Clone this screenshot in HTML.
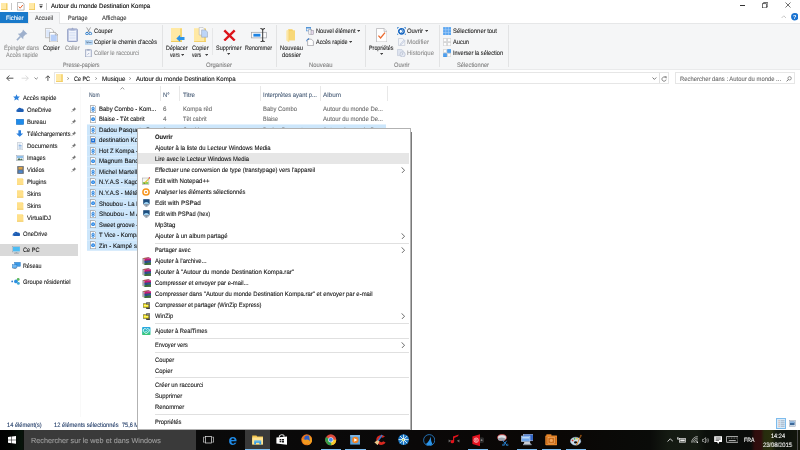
<!DOCTYPE html><html lang="fr"><head><meta charset="utf-8"><title>Autour du monde Destination Kompa</title><style>
html,body{margin:0;padding:0;background:#fff;}body{width:800px;height:450px;overflow:hidden;position:relative;font-family:"Liberation Sans", sans-serif;}
#root{position:absolute;left:0;top:0;width:800px;height:450px;overflow:hidden;}
#root div,#root svg,#root span{position:absolute;}
#root span{white-space:nowrap;line-height:10px;height:10px;transform-origin:0 50%;-webkit-text-stroke:0.1px;text-rendering:geometricPrecision;}
#root .ly{left:0;top:0;width:800px;height:450px;will-change:transform;}
</style></head><body><div id="root">
<div class="ly" id="ly-base">
<svg style="left:1px;top:2.8px" width="6.6" height="7.2" viewBox="0 0 6.6 7.2"><rect x="0" y="0" width="6.4" height="7" fill="#ffe9a6"/><rect x="5.1" y="0.4" width="1.3" height="6.6" fill="#f3cf66"/><rect x="0" y="6.2" width="6.4" height="0.8" fill="#f0c95c"/></svg>
<div style="left:11.2px;top:3px;width:0.5px;height:6.5px;background:#c8c8c8;"></div>
<svg style="left:17px;top:2px" width="7.5" height="8.5" viewBox="0 0 7.5 8.5"><path d="M0.4 0.4H5.5L7.1 2V8.1H0.4z" fill="#fff" stroke="#8a8a8a" stroke-width="0.6"/><path d="M1.8 4.6L3.2 6.2L5.8 3" fill="none" stroke="#e8642c" stroke-width="1"/></svg>
<svg style="left:28.5px;top:2.8px" width="6.6" height="7.2" viewBox="0 0 6.6 7.2"><rect x="0" y="0" width="6.4" height="7" fill="#ffe9a6"/><rect x="5.1" y="0.4" width="1.3" height="6.6" fill="#f3cf66"/><rect x="0" y="6.2" width="6.4" height="0.8" fill="#f0c95c"/></svg>
<svg style="left:38.8px;top:4px" width="4.2" height="4.6" viewBox="0 0 4.2 4.6"><rect x="0.3" y="0.2" width="3.4" height="0.6" fill="#444"/><path d="M0.2 1.7H3.8L2 4.3z" fill="#3a3a3a"/></svg>
<div style="left:46.3px;top:3px;width:0.5px;height:6.5px;background:#c8c8c8;"></div>
<div style="left:739.5px;top:5.2px;width:5px;height:0.6px;background:#333;"></div>
<svg style="left:761.5px;top:1.5px" width="6.5" height="6.5" viewBox="0 0 6.5 6.5"><path d="M1.6 1.6V0.5H5.8V4.8H4.6" fill="none" stroke="#333" stroke-width="0.7"/><rect x="0.5" y="1.7" width="4.1" height="4.2" fill="none" stroke="#333" stroke-width="0.7"/></svg>
<svg style="left:784.5px;top:2px" width="6" height="6" viewBox="0 0 6 6"><path d="M0.5 0.5L5.5 5.5M5.5 0.5L0.5 5.5" stroke="#333" stroke-width="0.7"/></svg>
<div style="left:0px;top:11.6px;width:27.6px;height:11.6px;background:#1979ca;"></div>
<div style="left:0px;top:23px;width:800px;height:47px;background:#f5f6f7;box-sizing:border-box;border-top:1px solid #e6e7e8;border-bottom:1px solid #e9eaeb;"></div>
<div style="left:28px;top:12px;width:32px;height:12px;background:#f5f6f7;box-sizing:border-box;border:1px solid #e4e5e6;border-bottom:none;"></div>
<svg style="left:781px;top:15px" width="6" height="4" viewBox="0 0 6 4"><path d="M0.6 3L2.8 0.8L5 3" fill="none" stroke="#b0b0b0" stroke-width="0.7"/></svg>
<svg style="left:790.6px;top:13.3px" width="7.6" height="7.6" viewBox="0 0 7.6 7.6"><circle cx="3.8" cy="3.8" r="3.7" fill="#1a73d1"/><text x="3.8" y="5.9" font-size="5.6" font-weight="700" text-anchor="middle" fill="#fff" font-family="Liberation Sans, sans-serif">?</text></svg>
<div style="left:162.3px;top:24.5px;width:0.6px;height:42.5px;background:#e2e3e4;"></div>
<div style="left:276.4px;top:24.5px;width:0.6px;height:42.5px;background:#e2e3e4;"></div>
<div style="left:365.2px;top:24.5px;width:0.6px;height:42.5px;background:#e2e3e4;"></div>
<div style="left:439.2px;top:24.5px;width:0.6px;height:42.5px;background:#e2e3e4;"></div>
<div style="left:508px;top:24.5px;width:0.6px;height:42.5px;background:#e2e3e4;"></div>
<div style="left:212.4px;top:28px;width:0.6px;height:27px;background:#e6e7e8;"></div>
<svg style="left:16px;top:29px" width="12" height="12" viewBox="0 0 12 12"><path d="M7 0.6L11.4 5L9.6 5.6L7.4 7.8L7.2 10.2L1.8 4.8L4.2 4.6L6.4 2.4z" fill="#9eb0cc"/><path d="M4.6 7.4L0.9 11.1" stroke="#9eb0cc" stroke-width="1.5"/></svg>
<svg style="left:45px;top:27.8px" width="13.4" height="14.4" viewBox="0 0 13.4 14.4"><path d="M0.4 0.4H6L8.5 2.9V9.7H0.4z" fill="#fff" stroke="#9c9c9c" stroke-width="0.6"/><rect x="1.2" y="1.6" width="3.8" height="7.2" fill="#dbe7fb"/><path d="M4.6 4.4H10.3L12.8 6.9V14H4.6z" fill="#fff" stroke="#8a8a8a" stroke-width="0.6"/><rect x="5.6" y="6.6" width="6.2" height="6.4" fill="#b7cff8"/><path d="M10.3 4.4V6.9H12.8" fill="none" stroke="#8a8a8a" stroke-width="0.5"/></svg>
<svg style="left:67.3px;top:27px" width="11" height="15.4" viewBox="0 0 11 15.4"><rect x="0.7" y="2" width="9.6" height="12.6" rx="0.6" fill="#c9d2ea" stroke="#8794bd" stroke-width="0.9"/><rect x="2" y="3.8" width="7" height="9.6" fill="#f6f8fd"/><path d="M4 2.4L5.5 0.4L7 2.4z" fill="#9aa6c8"/><rect x="3.4" y="2" width="4.2" height="1.5" fill="#a5b0cf"/><path d="M2.4 5.4h6.2M2.4 7h6.2M2.4 8.6h6.2M2.4 10.2h6.2M2.4 11.8h6.2" stroke="#c3d1ef" stroke-width="0.6"/></svg>
<svg style="left:85px;top:26.8px" width="7.5" height="8.6" viewBox="0 0 7.5 8.6"><path d="M1.6 0.4L4.6 5.4M5.6 0.4L2.6 5.4" stroke="#6a6a6a" stroke-width="0.6"/><circle cx="2" cy="6.6" r="1.3" fill="none" stroke="#1f74c7" stroke-width="0.9"/><circle cx="5.3" cy="6.6" r="1.3" fill="none" stroke="#1f74c7" stroke-width="0.9"/></svg>
<svg style="left:84.5px;top:40px" width="8" height="5" viewBox="0 0 8 5"><rect x="0.2" y="0.2" width="7.5" height="4.4" fill="#b9d7f3" stroke="#9cc3ea" stroke-width="0.4"/><path d="M1.3 1.4L2.3 3.2L3.2 1.4M3.4 2.5H6.6" stroke="#3a4c66" stroke-width="0.5" fill="none"/></svg>
<svg style="left:85px;top:49px" width="7" height="8.4" viewBox="0 0 7 8.4"><rect x="0.4" y="0.8" width="6" height="7.2" fill="#d9deea" stroke="#8f9bb8" stroke-width="0.6"/><rect x="1.4" y="2" width="4" height="5.2" fill="#f4f6fb"/><rect x="2.2" y="0.2" width="2.4" height="1.3" fill="#9aa6c0"/><path d="M2.6 5.6L4 4.2" stroke="#5a6fa0" stroke-width="0.6"/></svg>
<svg style="left:171px;top:28px" width="14" height="14.4" viewBox="0 0 14 14.4"><rect x="0" y="0" width="11" height="14" fill="#ffe9a4"/><rect x="9" y="0.5" width="2" height="13.5" fill="#f6d774"/><rect x="0" y="13" width="11" height="1" fill="#f0cb5e"/><path d="M5.3 10.4L9.2 6.8V8.9H13.5V11.9H9.2V14z" fill="#2b94e8"/></svg>
<svg style="left:181.0px;top:53.7px" width="3.2" height="2" viewBox="0 0 3.2 2"><path d="M0 0H3.2L1.6 1.9z" fill="#444"/></svg>
<svg style="left:194px;top:26.8px" width="14" height="15.6" viewBox="0 0 14 15.6"><rect x="0" y="1.2" width="12" height="14" fill="#ffe9a4"/><rect x="10" y="1.7" width="2" height="13.5" fill="#f6d774"/><rect x="0" y="14.2" width="12" height="1" fill="#f0cb5e"/><path d="M5.2 0.4H9L11 2.4V8H5.2z" fill="#f7f8fa" stroke="#a3a7b0" stroke-width="0.5"/><path d="M7.6 2.9H11.4L13.5 5V10.2H7.6z" fill="#bdd5f7" stroke="#8f99ad" stroke-width="0.5"/></svg>
<svg style="left:204.6px;top:53.7px" width="3.2" height="2" viewBox="0 0 3.2 2"><path d="M0 0H3.2L1.6 1.9z" fill="#444"/></svg>
<svg style="left:222.6px;top:28.6px" width="13" height="12.8" viewBox="0 0 13 12.8"><path d="M1.3 1.3L11.7 11.5M11.7 1.3L1.3 11.5" stroke="#dc141b" stroke-width="2.4"/></svg>
<svg style="left:227.0px;top:53.300000000000004px" width="3.2" height="2" viewBox="0 0 3.2 2"><path d="M0 0H3.2L1.6 1.9z" fill="#444"/></svg>
<svg style="left:250.5px;top:27.8px" width="16" height="14.4" viewBox="0 0 16 14.4"><rect x="0.6" y="4.3" width="14.8" height="5.6" fill="#fbfbfc" stroke="#9a9da3" stroke-width="0.7"/><rect x="2.4" y="5.8" width="7" height="2.8" fill="#1e84e4"/><path d="M11.7 0.6V13.8M9.4 0.5Q11.7 0.5 11.7 2.2M14 0.5Q11.7 0.5 11.7 2.2M9.4 13.9Q11.7 13.9 11.7 12.2M14 13.9Q11.7 13.9 11.7 12.2" stroke="#333" stroke-width="1" fill="none"/></svg>
<svg style="left:285.8px;top:28.8px" width="9.6" height="13.6" viewBox="0 0 9.6 13.6"><path d="M2.2 0.3H6.4L7 1.4H9.2V11.2H2.2z" fill="#f5cf62"/><path d="M2.6 1.8H9.2V11.2H2.6z" fill="#f8d878"/><path d="M0.3 1.6L2.9 0.6V13.3L0.3 11.6z" fill="#fce7a6"/><path d="M2.9 0.6V13.3" stroke="#eec65a" stroke-width="0.4"/></svg>
<svg style="left:306px;top:26.8px" width="8" height="8" viewBox="0 0 8 8"><rect x="0.3" y="0.3" width="4.4" height="3.6" fill="#e8f1fb" stroke="#4d8fd1" stroke-width="0.6"/><rect x="0.3" y="0.3" width="4.4" height="1.1" fill="#3b86d2"/><rect x="2.8" y="2.6" width="2.6" height="4.6" fill="#f5f5f7" stroke="#8f8f9a" stroke-width="0.5"/><rect x="5" y="3.4" width="2.6" height="4.2" fill="#e6d7ea" stroke="#8f8f9a" stroke-width="0.5"/></svg>
<svg style="left:357.0px;top:30.3px" width="3.2" height="2" viewBox="0 0 3.2 2"><path d="M0 0H3.2L1.6 1.9z" fill="#444"/></svg>
<svg style="left:306.3px;top:38.3px" width="8" height="8" viewBox="0 0 8 8"><path d="M1.6 1.2H5.4L7.4 3.2V7.6H1.6z" fill="#fdfdfd" stroke="#7e7e86" stroke-width="0.55"/><path d="M0.3 3.4Q0.6 0.9 3 0.9L2.4 0.1M3 0.9L2.2 1.7" stroke="#2f72c4" stroke-width="0.7" fill="none"/></svg>
<svg style="left:349.0px;top:41.300000000000004px" width="3.2" height="2" viewBox="0 0 3.2 2"><path d="M0 0H3.2L1.6 1.9z" fill="#444"/></svg>
<svg style="left:375.8px;top:27.8px" width="11.6" height="14.6" viewBox="0 0 11.6 14.6"><path d="M0.5 0.5H8L11 3.5V14H0.5z" fill="#fefefe" stroke="#a3a3a8" stroke-width="0.6"/><path d="M8 0.5V3.5H11" fill="#ececef" stroke="#a3a3a8" stroke-width="0.5"/><path d="M2.4 7.6L4.6 10L9 4.6" fill="none" stroke="#ea6a30" stroke-width="1.3"/></svg>
<svg style="left:380.0px;top:53.300000000000004px" width="3.2" height="2" viewBox="0 0 3.2 2"><path d="M0 0H3.2L1.6 1.9z" fill="#444"/></svg>
<svg style="left:397px;top:26.8px" width="9" height="8.6" viewBox="0 0 9 8.6"><path d="M0.3 2V0.3H2M7 0.3H8.7V2M8.7 6.6V8.3H7M2 8.3H0.3V6.6" fill="none" stroke="#1d74cc" stroke-width="0.7"/><circle cx="4.5" cy="4.3" r="2.7" fill="#fff" stroke="#1565c0" stroke-width="1.4"/><circle cx="3.5" cy="4.3" r="2" fill="none" stroke="#1565c0" stroke-width="0.9"/></svg>
<svg style="left:425.0px;top:30.3px" width="3.2" height="2" viewBox="0 0 3.2 2"><path d="M0 0H3.2L1.6 1.9z" fill="#444"/></svg>
<svg style="left:397.8px;top:38.3px" width="8" height="8" viewBox="0 0 8 8"><path d="M0.5 0.5H4.6L6.8 2.7V7.5H0.5z" fill="#f3f5f9" stroke="#b7bfd0" stroke-width="0.55"/><path d="M2.4 5.8L6 1.8L7 2.8L3.4 6.6L2.2 7z" fill="#dfe5f1" stroke="#a9b3c9" stroke-width="0.4"/></svg>
<svg style="left:397px;top:49px" width="9" height="8.4" viewBox="0 0 9 8.4"><path d="M0.5 0.5H4.8L6.4 2.1V6.6H0.5z" fill="#dde3ef" stroke="#b3bccf" stroke-width="0.5"/><circle cx="5.6" cy="5.4" r="2.6" fill="#e6eaf3" stroke="#a7b1c7" stroke-width="0.55"/><path d="M5.6 3.8V5.4L4.4 6.2" stroke="#97a2bb" stroke-width="0.5" fill="none"/></svg>
<svg style="left:443px;top:26.9px" width="8.2" height="8.2" viewBox="0 0 8.2 8.2"><rect x="0.1" y="0.1" width="8" height="8" fill="#5aa6f0"/><path d="M2.75 0V8.2M5.45 0V8.2M0 2.75H8.2M0 5.45H8.2" stroke="#a9d0f8" stroke-width="0.6"/></svg>
<svg style="left:443px;top:38.2px" width="8.2" height="8.2" viewBox="0 0 8.2 8.2"><rect x="0.3" y="0.3" width="3.5" height="3.5" rx="0.5" fill="#fdfdfd" stroke="#a9a9a9" stroke-width="0.45"/><rect x="4.3999999999999995" y="0.3" width="3.5" height="3.5" rx="0.5" fill="#fdfdfd" stroke="#a9a9a9" stroke-width="0.45"/><rect x="0.3" y="4.3999999999999995" width="3.5" height="3.5" rx="0.5" fill="#fdfdfd" stroke="#a9a9a9" stroke-width="0.45"/><rect x="4.3999999999999995" y="4.3999999999999995" width="3.5" height="3.5" rx="0.5" fill="#fdfdfd" stroke="#a9a9a9" stroke-width="0.45"/></svg>
<svg style="left:443px;top:49px" width="8.2" height="8.2" viewBox="0 0 8.2 8.2"><rect x="0.3" y="0.3" width="3.5" height="3.5" rx="0.5" fill="#fdfdfd" stroke="#a9a9a9" stroke-width="0.45"/><rect x="4.3999999999999995" y="0.3" width="3.5" height="3.5" rx="0.5" fill="#4fa0ef" stroke="#2d86dd" stroke-width="0.45"/><rect x="0.3" y="4.3999999999999995" width="3.5" height="3.5" rx="0.5" fill="#4fa0ef" stroke="#2d86dd" stroke-width="0.45"/><rect x="4.3999999999999995" y="4.3999999999999995" width="3.5" height="3.5" rx="0.5" fill="#fdfdfd" stroke="#a9a9a9" stroke-width="0.45"/></svg>
<svg style="left:6px;top:75px" width="8" height="6.4" viewBox="0 0 8 6.4"><path d="M7.4 3.2H0.8M3.4 0.5L0.7 3.2L3.4 5.9" fill="none" stroke="#4a4a4a" stroke-width="0.95"/></svg>
<svg style="left:20.5px;top:75px" width="8" height="6.4" viewBox="0 0 8 6.4"><path d="M0.6 3.2H7.2M4.6 0.5L7.3 3.2L4.6 5.9" fill="none" stroke="#cfcfcf" stroke-width="0.75"/></svg>
<svg style="left:34px;top:76.8px" width="4.4" height="3" viewBox="0 0 4.4 3"><path d="M0.5 0.5L2.2 2.2L3.9 0.5" fill="none" stroke="#666" stroke-width="0.75"/></svg>
<svg style="left:44.6px;top:75.2px" width="5.8" height="6" viewBox="0 0 5.8 6"><path d="M2.9 5.9V0.9M0.4 3.3L2.9 0.8L5.4 3.3" fill="none" stroke="#3c3c3c" stroke-width="0.85"/></svg>
<div style="left:54px;top:72px;width:615px;height:12px;background:#fff;box-sizing:border-box;border:1px solid #e6e6e6;"></div>
<svg style="left:56.2px;top:74px" width="6.8" height="7.9" viewBox="0 0 6.8 7.9"><rect x="0" y="0" width="6.7" height="7.8" fill="#ffe9a6"/><rect x="5.3" y="0.4" width="1.4" height="7.4" fill="#f3cf66"/><rect x="0" y="7" width="6.7" height="0.8" fill="#f0c95c"/></svg>
<svg style="left:67.3px;top:77.19999999999999px" width="2.2" height="3" viewBox="0 0 2.2 3"><path d="M0.4 0.3L1.7 1.5L0.4 2.7" fill="none" stroke="#555" stroke-width="0.7"/></svg>
<svg style="left:94.5px;top:77.19999999999999px" width="2.2" height="3" viewBox="0 0 2.2 3"><path d="M0.4 0.3L1.7 1.5L0.4 2.7" fill="none" stroke="#555" stroke-width="0.7"/></svg>
<svg style="left:129.3px;top:77.19999999999999px" width="2.2" height="3" viewBox="0 0 2.2 3"><path d="M0.4 0.3L1.7 1.5L0.4 2.7" fill="none" stroke="#555" stroke-width="0.7"/></svg>
<svg style="left:652px;top:77px" width="5" height="3.4" viewBox="0 0 5 3.4"><path d="M0.5 0.5L2.4 2.4L4.3 0.5" fill="none" stroke="#444" stroke-width="0.7"/></svg>
<div style="left:658.6px;top:73.4px;width:0.5px;height:10px;background:#e0e0e0;"></div>
<svg style="left:661px;top:75.6px" width="6" height="6" viewBox="0 0 6 6"><path d="M4.9 2.1A2.1 2.1 0 1 0 5.1 3.6" fill="none" stroke="#555" stroke-width="0.7"/><path d="M3.6 0.6H5.3V2.3" fill="none" stroke="#555" stroke-width="0.6"/></svg>
<div style="left:675px;top:72px;width:120px;height:12px;background:#fff;box-sizing:border-box;border:1px solid #e6e6e6;"></div>
<svg style="left:786px;top:75.8px" width="6" height="6" viewBox="0 0 6 6"><circle cx="3.6" cy="2.3" r="1.7" fill="none" stroke="#555" stroke-width="0.6"/><path d="M2.4 3.5L0.6 5.4" stroke="#555" stroke-width="0.8"/></svg>
<div style="left:776px;top:418px;width:10px;height:11px;background:#d9ebf9;box-sizing:border-box;border:1px solid #7dbbec;"></div>
<svg style="left:777.6px;top:419.6px" width="7" height="7.6" viewBox="0 0 7 7.6"><path d="M2.6 0.8H6.6M2.6 2.8H6.6M2.6 4.8H6.6M2.6 6.8H6.6" stroke="#7a8aa0" stroke-width="0.6"/><path d="M0.4 0.8H1.8M0.4 2.8H1.8M0.4 4.8H1.8M0.4 6.8H1.8" stroke="#d88d6a" stroke-width="0.7"/></svg>
<svg style="left:789px;top:420px" width="6.6" height="6.6" viewBox="0 0 6.6 6.6"><rect x="0.3" y="0.3" width="6" height="6" fill="#eef2f7" stroke="#8e9bb0" stroke-width="0.5"/><rect x="1" y="1.6" width="4.6" height="3.6" fill="#3e6a9a"/><rect x="1" y="1.6" width="4.6" height="1.4" fill="#8ab4de"/></svg>
<span style="left:50.5px;top:2px;font-size:6.3px;color:#000;transform:scaleX(0.961);">Autour du monde Destination Kompa</span>
<span style="left:5.5px;top:14px;font-size:6.3px;color:#fff;transform:scaleX(0.926);">Fichier</span>
<span style="left:35px;top:14px;font-size:6.3px;color:#3a3a3a;transform:scaleX(0.886);">Accueil</span>
<span style="left:67.5px;top:14px;font-size:6.3px;color:#3a3a3a;transform:scaleX(0.884);">Partage</span>
<span style="left:101.5px;top:14px;font-size:6.3px;color:#3a3a3a;transform:scaleX(0.937);">Affichage</span>
<span style="left:4px;top:44px;font-size:6.3px;color:#8f8f8f;transform:scaleX(0.909);">Épingler dans</span>
<span style="left:5.5px;top:51px;font-size:6.3px;color:#8f8f8f;transform:scaleX(0.879);">Accès rapide</span>
<span style="left:43px;top:44px;font-size:6.3px;color:#262626;transform:scaleX(0.889);">Copier</span>
<span style="left:65px;top:44px;font-size:6.3px;color:#8f8f8f;transform:scaleX(0.881);">Coller</span>
<span style="left:94px;top:27px;font-size:6.3px;color:#262626;transform:scaleX(0.908);">Couper</span>
<span style="left:94px;top:38px;font-size:6.3px;color:#262626;transform:scaleX(0.898);">Copier le chemin d'accès</span>
<span style="left:94px;top:49px;font-size:6.3px;color:#8f8f8f;transform:scaleX(0.893);">Coller le raccourci</span>
<span style="left:62.5px;top:61px;font-size:6.3px;color:#7f7f7f;transform:scaleX(0.862);">Presse-papiers</span>
<span style="left:166px;top:44px;font-size:6.3px;color:#262626;transform:scaleX(0.853);">Déplacer</span>
<span style="left:169.7px;top:51px;font-size:6.3px;color:#262626;transform:scaleX(0.815);">vers</span>
<span style="left:191.5px;top:44px;font-size:6.3px;color:#262626;transform:scaleX(0.889);">Copier</span>
<span style="left:192px;top:51px;font-size:6.3px;color:#262626;transform:scaleX(0.781);">vers</span>
<span style="left:216px;top:44px;font-size:6.3px;color:#262626;transform:scaleX(0.878);">Supprimer</span>
<span style="left:245px;top:44px;font-size:6.3px;color:#262626;transform:scaleX(0.867);">Renommer</span>
<span style="left:206px;top:61px;font-size:6.3px;color:#7f7f7f;transform:scaleX(0.940);">Organiser</span>
<span style="left:280px;top:44px;font-size:6.3px;color:#262626;transform:scaleX(0.912);">Nouveau</span>
<span style="left:282px;top:51px;font-size:6.3px;color:#262626;transform:scaleX(0.935);">dossier</span>
<span style="left:315.5px;top:27px;font-size:6.3px;color:#262626;transform:scaleX(0.903);">Nouvel élément</span>
<span style="left:315.5px;top:38px;font-size:6.3px;color:#262626;transform:scaleX(0.865);">Accès rapide</span>
<span style="left:309px;top:61px;font-size:6.3px;color:#7f7f7f;transform:scaleX(0.932);">Nouveau</span>
<span style="left:369px;top:44px;font-size:6.3px;color:#262626;transform:scaleX(0.854);">Propriétés</span>
<span style="left:407px;top:27px;font-size:6.3px;color:#262626;transform:scaleX(0.933);">Ouvrir</span>
<span style="left:407px;top:38px;font-size:6.3px;color:#8f8f8f;transform:scaleX(0.982);">Modifier</span>
<span style="left:407px;top:49px;font-size:6.3px;color:#8f8f8f;transform:scaleX(0.952);">Historique</span>
<span style="left:394px;top:61px;font-size:6.3px;color:#7f7f7f;transform:scaleX(0.903);">Ouvrir</span>
<span style="left:453px;top:27px;font-size:6.3px;color:#262626;transform:scaleX(0.931);">Sélectionner tout</span>
<span style="left:453px;top:38px;font-size:6.3px;color:#262626;transform:scaleX(0.896);">Aucun</span>
<span style="left:453px;top:49px;font-size:6.3px;color:#262626;transform:scaleX(0.893);">Inverser la sélection</span>
<span style="left:457px;top:61px;font-size:6.3px;color:#7f7f7f;transform:scaleX(0.914);">Sélectionner</span>
<span style="left:74px;top:75px;font-size:6.3px;color:#111;transform:scaleX(0.863);">Ce PC</span>
<span style="left:101.5px;top:75px;font-size:6.3px;color:#111;transform:scaleX(0.987);">Musique</span>
<span style="left:136px;top:75px;font-size:6.3px;color:#111;transform:scaleX(0.964);">Autour du monde Destination Kompa</span>
<span style="left:680px;top:75px;font-size:6.3px;color:#6d6d6d;transform:scaleX(0.934);">Rechercher dans : Autour du monde ...</span>
<span style="left:7.3px;top:421px;font-size:6.3px;color:#1f3a66;transform:scaleX(0.901);">14 élément(s)</span>
<span style="left:53.5px;top:421px;font-size:6.3px;color:#1f3a66;transform:scaleX(0.908);">12 éléments sélectionnés</span>
<span style="left:121.5px;top:421px;font-size:6.3px;color:#1f3a66;transform:scaleX(0.879);">75,6 Mo</span>
</div>
<div class="ly" id="ly-list">
<svg style="left:120.2px;top:87.4px" width="5" height="3" viewBox="0 0 5 3"><path d="M0.5 2.4L2.4 0.6L4.3 2.4" fill="none" stroke="#6f6f6f" stroke-width="0.7"/></svg>
<div style="left:159.6px;top:86px;width:0.5px;height:14.5px;background:#e8e8e8;"></div>
<div style="left:179.4px;top:86px;width:0.5px;height:14.5px;background:#e8e8e8;"></div>
<div style="left:259.7px;top:86px;width:0.5px;height:14.5px;background:#e8e8e8;"></div>
<div style="left:319.7px;top:86px;width:0.5px;height:14.5px;background:#e8e8e8;"></div>
<div style="left:386.8px;top:86px;width:0.5px;height:14.5px;background:#e8e8e8;"></div>
<div style="left:87px;top:124px;width:299px;height:1px;background:#e2f1fd;"></div>
<div style="left:87px;top:125px;width:299px;height:125px;background:#cce6fb;"></div>
<div style="left:87px;top:250px;width:299px;height:1px;background:#d9ecfc;"></div>
<div style="left:87px;top:135px;width:299px;height:1px;background:#d7ebfc;"></div>
<div style="left:87px;top:145px;width:299px;height:1px;background:#d7ebfc;"></div>
<div style="left:87px;top:156px;width:299px;height:1px;background:#d7ebfc;"></div>
<div style="left:87px;top:166px;width:299px;height:1px;background:#d7ebfc;"></div>
<div style="left:87px;top:177px;width:299px;height:1px;background:#d7ebfc;"></div>
<div style="left:87px;top:187px;width:299px;height:1px;background:#d7ebfc;"></div>
<div style="left:87px;top:198px;width:299px;height:1px;background:#d7ebfc;"></div>
<div style="left:87px;top:208px;width:299px;height:1px;background:#d7ebfc;"></div>
<div style="left:87px;top:219px;width:299px;height:1px;background:#d7ebfc;"></div>
<div style="left:87px;top:229px;width:299px;height:1px;background:#d7ebfc;"></div>
<div style="left:87px;top:240px;width:299px;height:1px;background:#d7ebfc;"></div>
<svg style="left:90px;top:104.5px" width="6.4" height="8.2" viewBox="0 0 6.4 8.2"><path d="M0.35 0.35H4.5L5.9 1.75V7.8H0.35z" fill="#fff" stroke="#7f7f7f" stroke-width="0.65"/><circle cx="3.1" cy="3.3" r="1.15" fill="none" stroke="#1f7fe0" stroke-width="0.95"/><circle cx="3.1" cy="5.2" r="1.15" fill="none" stroke="#1f7fe0" stroke-width="0.95"/></svg>
<svg style="left:90px;top:115.02px" width="6.4" height="8.2" viewBox="0 0 6.4 8.2"><path d="M0.35 0.35H4.5L5.9 1.75V7.8H0.35z" fill="#fff" stroke="#7f7f7f" stroke-width="0.65"/><circle cx="3.1" cy="4.2" r="1.9" fill="#2a86e6"/><circle cx="3.1" cy="4.2" r="0.6" fill="#bfe0fb"/></svg>
<svg style="left:90px;top:125.53999999999999px" width="6.4" height="8.2" viewBox="0 0 6.4 8.2"><path d="M0.35 0.35H4.5L5.9 1.75V7.8H0.35z" fill="#fff" stroke="#7f7f7f" stroke-width="0.65"/><circle cx="3.1" cy="3.3" r="1.15" fill="none" stroke="#1f7fe0" stroke-width="0.95"/><circle cx="3.1" cy="5.2" r="1.15" fill="none" stroke="#1f7fe0" stroke-width="0.95"/></svg>
<svg style="left:90px;top:136.05999999999997px" width="6.4" height="8.2" viewBox="0 0 6.4 8.2"><path d="M0.35 0.35H4.5L5.9 1.75V7.8H0.35z" fill="#fff" stroke="#7f7f7f" stroke-width="0.65"/><rect x="1.1" y="2.3" width="4" height="4.3" fill="#1c6fd6"/><rect x="2.2" y="3.6" width="1.8" height="1.2" fill="#cfe6fb"/></svg>
<svg style="left:90px;top:146.57999999999998px" width="6.4" height="8.2" viewBox="0 0 6.4 8.2"><path d="M0.35 0.35H4.5L5.9 1.75V7.8H0.35z" fill="#fff" stroke="#7f7f7f" stroke-width="0.65"/><circle cx="3.1" cy="3.3" r="1.15" fill="none" stroke="#1f7fe0" stroke-width="0.95"/><circle cx="3.1" cy="5.2" r="1.15" fill="none" stroke="#1f7fe0" stroke-width="0.95"/></svg>
<svg style="left:90px;top:157.09999999999997px" width="6.4" height="8.2" viewBox="0 0 6.4 8.2"><path d="M0.35 0.35H4.5L5.9 1.75V7.8H0.35z" fill="#fff" stroke="#7f7f7f" stroke-width="0.65"/><circle cx="3.1" cy="4.2" r="1.9" fill="#2a86e6"/><circle cx="3.1" cy="4.2" r="0.6" fill="#bfe0fb"/></svg>
<svg style="left:90px;top:167.61999999999998px" width="6.4" height="8.2" viewBox="0 0 6.4 8.2"><path d="M0.35 0.35H4.5L5.9 1.75V7.8H0.35z" fill="#fff" stroke="#7f7f7f" stroke-width="0.65"/><circle cx="3.1" cy="3.3" r="1.15" fill="none" stroke="#1f7fe0" stroke-width="0.95"/><circle cx="3.1" cy="5.2" r="1.15" fill="none" stroke="#1f7fe0" stroke-width="0.95"/></svg>
<svg style="left:90px;top:178.14px" width="6.4" height="8.2" viewBox="0 0 6.4 8.2"><path d="M0.35 0.35H4.5L5.9 1.75V7.8H0.35z" fill="#fff" stroke="#7f7f7f" stroke-width="0.65"/><circle cx="3.1" cy="4.2" r="1.9" fill="#2a86e6"/><circle cx="3.1" cy="4.2" r="0.6" fill="#bfe0fb"/></svg>
<svg style="left:90px;top:188.65999999999997px" width="6.4" height="8.2" viewBox="0 0 6.4 8.2"><path d="M0.35 0.35H4.5L5.9 1.75V7.8H0.35z" fill="#fff" stroke="#7f7f7f" stroke-width="0.65"/><circle cx="3.1" cy="3.3" r="1.15" fill="none" stroke="#1f7fe0" stroke-width="0.95"/><circle cx="3.1" cy="5.2" r="1.15" fill="none" stroke="#1f7fe0" stroke-width="0.95"/></svg>
<svg style="left:90px;top:199.17999999999998px" width="6.4" height="8.2" viewBox="0 0 6.4 8.2"><path d="M0.35 0.35H4.5L5.9 1.75V7.8H0.35z" fill="#fff" stroke="#7f7f7f" stroke-width="0.65"/><circle cx="3.1" cy="4.2" r="1.9" fill="#2a86e6"/><circle cx="3.1" cy="4.2" r="0.6" fill="#bfe0fb"/></svg>
<svg style="left:90px;top:209.7px" width="6.4" height="8.2" viewBox="0 0 6.4 8.2"><path d="M0.35 0.35H4.5L5.9 1.75V7.8H0.35z" fill="#fff" stroke="#7f7f7f" stroke-width="0.65"/><circle cx="3.1" cy="3.3" r="1.15" fill="none" stroke="#1f7fe0" stroke-width="0.95"/><circle cx="3.1" cy="5.2" r="1.15" fill="none" stroke="#1f7fe0" stroke-width="0.95"/></svg>
<svg style="left:90px;top:220.21999999999997px" width="6.4" height="8.2" viewBox="0 0 6.4 8.2"><path d="M0.35 0.35H4.5L5.9 1.75V7.8H0.35z" fill="#fff" stroke="#7f7f7f" stroke-width="0.65"/><circle cx="3.1" cy="4.2" r="1.9" fill="#2a86e6"/><circle cx="3.1" cy="4.2" r="0.6" fill="#bfe0fb"/></svg>
<svg style="left:90px;top:230.73999999999998px" width="6.4" height="8.2" viewBox="0 0 6.4 8.2"><path d="M0.35 0.35H4.5L5.9 1.75V7.8H0.35z" fill="#fff" stroke="#7f7f7f" stroke-width="0.65"/><circle cx="3.1" cy="3.3" r="1.15" fill="none" stroke="#1f7fe0" stroke-width="0.95"/><circle cx="3.1" cy="5.2" r="1.15" fill="none" stroke="#1f7fe0" stroke-width="0.95"/></svg>
<svg style="left:90px;top:241.26px" width="6.4" height="8.2" viewBox="0 0 6.4 8.2"><path d="M0.35 0.35H4.5L5.9 1.75V7.8H0.35z" fill="#fff" stroke="#7f7f7f" stroke-width="0.65"/><circle cx="3.1" cy="4.2" r="1.9" fill="#2a86e6"/><circle cx="3.1" cy="4.2" r="0.6" fill="#bfe0fb"/></svg>
<span style="left:88.8px;top:91px;font-size:6.3px;color:#4c607a;transform:scaleX(0.797);">Nom</span>
<span style="left:163px;top:91px;font-size:6.3px;color:#4c607a;transform:scaleX(0.932);">N°</span>
<span style="left:183px;top:91px;font-size:6.3px;color:#4c607a;transform:scaleX(0.970);">Titre</span>
<span style="left:263px;top:91px;font-size:6.3px;color:#4c607a;transform:scaleX(0.935);">Interprètes ayant p...</span>
<span style="left:323px;top:91px;font-size:6.3px;color:#4c607a;transform:scaleX(1.008);">Album</span>
<span style="left:98.8px;top:105px;font-size:6.3px;color:#111;transform:scaleX(0.950);">Baby Combo - Kom...</span>
<span style="left:163px;top:105px;font-size:6.3px;color:#6d6d6d;">6</span>
<span style="left:183px;top:105px;font-size:6.3px;color:#6d6d6d;transform:scaleX(0.941);">Kompa rèd</span>
<span style="left:263px;top:105px;font-size:6.3px;color:#6d6d6d;transform:scaleX(0.934);">Baby Combo</span>
<span style="left:323px;top:105px;font-size:6.3px;color:#6d6d6d;transform:scaleX(0.947);">Autour du monde De...</span>
<span style="left:98.8px;top:115px;font-size:6.3px;color:#111;transform:scaleX(0.931);">Blaise - Tèt cabrit</span>
<span style="left:163px;top:115px;font-size:6.3px;color:#6d6d6d;">4</span>
<span style="left:183px;top:115px;font-size:6.3px;color:#6d6d6d;transform:scaleX(0.899);">Tèt cabrit</span>
<span style="left:263px;top:115px;font-size:6.3px;color:#6d6d6d;transform:scaleX(0.874);">Blaise</span>
<span style="left:323px;top:115px;font-size:6.3px;color:#6d6d6d;transform:scaleX(0.947);">Autour du monde De...</span>
<span style="left:98.8px;top:126px;font-size:6.3px;color:#111;transform:scaleX(0.966);">Dadou Pasquet - P...</span>
<span style="left:163px;top:126px;font-size:6.3px;color:#6d6d6d;">1</span>
<span style="left:183px;top:126px;font-size:6.3px;color:#6d6d6d;transform:scaleX(0.879);">Ou pi bon</span>
<span style="left:263px;top:126px;font-size:6.3px;color:#6d6d6d;transform:scaleX(0.921);">Dadou Pasquet</span>
<span style="left:323px;top:126px;font-size:6.3px;color:#6d6d6d;transform:scaleX(0.947);">Autour du monde De...</span>
<span style="left:98.8px;top:136px;font-size:6.3px;color:#111;transform:scaleX(0.981);">destination Kompa</span>
<span style="left:98.8px;top:147px;font-size:6.3px;color:#111;transform:scaleX(0.950);">Hot Z Kompa - Bél...</span>
<span style="left:163px;top:147px;font-size:6.3px;color:#6d6d6d;">8</span>
<span style="left:183px;top:147px;font-size:6.3px;color:#6d6d6d;transform:scaleX(0.874);">Bél ti famn</span>
<span style="left:263px;top:147px;font-size:6.3px;color:#6d6d6d;transform:scaleX(0.943);">Hot Z Kompa</span>
<span style="left:323px;top:147px;font-size:6.3px;color:#6d6d6d;transform:scaleX(0.947);">Autour du monde De...</span>
<span style="left:98.8px;top:157px;font-size:6.3px;color:#111;transform:scaleX(0.967);">Magnum Band - Ex...</span>
<span style="left:163px;top:157px;font-size:6.3px;color:#6d6d6d;">3</span>
<span style="left:183px;top:157px;font-size:6.3px;color:#6d6d6d;transform:scaleX(0.857);">Expérience</span>
<span style="left:263px;top:157px;font-size:6.3px;color:#6d6d6d;transform:scaleX(0.903);">Magnum Band</span>
<span style="left:323px;top:157px;font-size:6.3px;color:#6d6d6d;transform:scaleX(0.947);">Autour du monde De...</span>
<span style="left:98.8px;top:168px;font-size:6.3px;color:#111;transform:scaleX(0.982);">Michel Martelly - P...</span>
<span style="left:163px;top:168px;font-size:6.3px;color:#6d6d6d;">7</span>
<span style="left:183px;top:168px;font-size:6.3px;color:#6d6d6d;transform:scaleX(0.816);">Pa manyen</span>
<span style="left:263px;top:168px;font-size:6.3px;color:#6d6d6d;">Michel Martelly</span>
<span style="left:323px;top:168px;font-size:6.3px;color:#6d6d6d;transform:scaleX(0.947);">Autour du monde De...</span>
<span style="left:98.8px;top:178px;font-size:6.3px;color:#111;transform:scaleX(0.930);">N.Y.A.S - Kago - Ma...</span>
<span style="left:163px;top:178px;font-size:6.3px;color:#6d6d6d;">2</span>
<span style="left:183px;top:178px;font-size:6.3px;color:#6d6d6d;transform:scaleX(0.869);">Mandela</span>
<span style="left:263px;top:178px;font-size:6.3px;color:#6d6d6d;transform:scaleX(0.926);">N.Y.A.S</span>
<span style="left:323px;top:178px;font-size:6.3px;color:#6d6d6d;transform:scaleX(0.947);">Autour du monde De...</span>
<span style="left:98.8px;top:189px;font-size:6.3px;color:#111;transform:scaleX(0.936);">N.Y.A.S - Mété Kom...</span>
<span style="left:163px;top:189px;font-size:6.3px;color:#6d6d6d;">5</span>
<span style="left:183px;top:189px;font-size:6.3px;color:#6d6d6d;transform:scaleX(0.840);">Mété Kompa</span>
<span style="left:263px;top:189px;font-size:6.3px;color:#6d6d6d;transform:scaleX(0.926);">N.Y.A.S</span>
<span style="left:323px;top:189px;font-size:6.3px;color:#6d6d6d;transform:scaleX(0.947);">Autour du monde De...</span>
<span style="left:98.8px;top:200px;font-size:6.3px;color:#111;transform:scaleX(0.939);">Shoubou - La lin.mp3</span>
<span style="left:163px;top:200px;font-size:6.3px;color:#6d6d6d;">9</span>
<span style="left:183px;top:200px;font-size:6.3px;color:#6d6d6d;transform:scaleX(0.929);">La lin</span>
<span style="left:263px;top:200px;font-size:6.3px;color:#6d6d6d;transform:scaleX(0.912);">Shoubou</span>
<span style="left:323px;top:200px;font-size:6.3px;color:#6d6d6d;transform:scaleX(0.947);">Autour du monde De...</span>
<span style="left:98.8px;top:210px;font-size:6.3px;color:#111;transform:scaleX(0.986);">Shoubou - M Anvi...</span>
<span style="left:163px;top:210px;font-size:6.3px;color:#6d6d6d;">10</span>
<span style="left:183px;top:210px;font-size:6.3px;color:#6d6d6d;transform:scaleX(0.952);">M Anvi</span>
<span style="left:263px;top:210px;font-size:6.3px;color:#6d6d6d;transform:scaleX(0.912);">Shoubou</span>
<span style="left:323px;top:210px;font-size:6.3px;color:#6d6d6d;transform:scaleX(0.947);">Autour du monde De...</span>
<span style="left:98.8px;top:221px;font-size:6.3px;color:#111;transform:scaleX(0.928);">Sweet groove - San...</span>
<span style="left:163px;top:221px;font-size:6.3px;color:#6d6d6d;">11</span>
<span style="left:183px;top:221px;font-size:6.3px;color:#6d6d6d;transform:scaleX(0.846);">San manti</span>
<span style="left:263px;top:221px;font-size:6.3px;color:#6d6d6d;transform:scaleX(0.935);">Sweet groove</span>
<span style="left:323px;top:221px;font-size:6.3px;color:#6d6d6d;transform:scaleX(0.947);">Autour du monde De...</span>
<span style="left:98.8px;top:231px;font-size:6.3px;color:#111;transform:scaleX(0.937);">T Vice - Kompa Ma...</span>
<span style="left:163px;top:231px;font-size:6.3px;color:#6d6d6d;">12</span>
<span style="left:183px;top:231px;font-size:6.3px;color:#6d6d6d;transform:scaleX(0.796);">Kompa Mamba</span>
<span style="left:263px;top:231px;font-size:6.3px;color:#6d6d6d;transform:scaleX(0.908);">T Vice</span>
<span style="left:323px;top:231px;font-size:6.3px;color:#6d6d6d;transform:scaleX(0.947);">Autour du monde De...</span>
<span style="left:98.8px;top:242px;font-size:6.3px;color:#111;transform:scaleX(0.968);">Zin - Kampé sou li...</span>
<span style="left:163px;top:242px;font-size:6.3px;color:#6d6d6d;">13</span>
<span style="left:183px;top:242px;font-size:6.3px;color:#6d6d6d;transform:scaleX(0.852);">Kampé sou li</span>
<span style="left:263px;top:242px;font-size:6.3px;color:#6d6d6d;transform:scaleX(0.914);">Zin</span>
<span style="left:323px;top:242px;font-size:6.3px;color:#6d6d6d;transform:scaleX(0.947);">Autour du monde De...</span>
</div>
<div class="ly" id="ly-nav">
<div style="left:80px;top:87px;width:1px;height:330px;background:#f9f9f9;"></div>
<div style="left:0px;top:244px;width:78px;height:11.6px;background:#d9d9d9;"></div>
<svg style="left:13.1px;top:94.2px" width="7" height="6.8" viewBox="0 0 7 6.8"><path d="M3.5 0.2L4.5 2.4L6.9 2.6L5.1 4.2L5.7 6.6L3.5 5.3L1.3 6.6L1.9 4.2L0.1 2.6L2.5 2.4z" fill="#2a7fdb"/></svg>
<svg style="left:15.8px;top:107.10000000000001px" width="8" height="5.2" viewBox="0 0 8 5.2"><path d="M1.6 5A1.5 1.5 0 0 1 1.7 2.1A2.1 2.1 0 0 1 5.3 1.6A1.8 1.8 0 0 1 7.7 3.4A1.2 1.2 0 0 1 7 5z" fill="#1d5db3"/><path d="M0.8 4.9A1.2 1.2 0 0 1 1.2 3A1.6 1.6 0 0 1 3.6 2.6" fill="none" stroke="#4b8ad8" stroke-width="0.6"/></svg>
<svg style="left:71.2px;top:107.1px" width="5.5" height="5.5" viewBox="0 0 5 5"><path d="M2.9 0.3L4.7 2.1L3.9 2.3L3 3.2L2.9 4.2L0.8 2.1L1.8 2L2.7 1.1z" fill="#777"/><path d="M1.8 3.2L0.3 4.7" stroke="#777" stroke-width="0.55"/></svg>
<svg style="left:16px;top:118.6px" width="8" height="6.6" viewBox="0 0 8 6.6"><rect x="0.2" y="0.2" width="7.6" height="5.4" fill="#1e8bea" stroke="#1668bd" stroke-width="0.4"/><rect x="2.4" y="5.8" width="3.2" height="0.7" fill="#5b6b80"/></svg>
<svg style="left:71.2px;top:119.1px" width="5.5" height="5.5" viewBox="0 0 5 5"><path d="M2.9 0.3L4.7 2.1L3.9 2.3L3 3.2L2.9 4.2L0.8 2.1L1.8 2L2.7 1.1z" fill="#777"/><path d="M1.8 3.2L0.3 4.7" stroke="#777" stroke-width="0.55"/></svg>
<svg style="left:16.4px;top:129.6px" width="7.4" height="7.6" viewBox="0 0 7.4 7.6"><path d="M2.4 0.2H5V3.4H7.2L3.7 6.8L0.2 3.4H2.4z" fill="#2b80de"/><rect x="0.6" y="7" width="6.2" height="0.6" fill="#2b80de"/></svg>
<svg style="left:71.2px;top:131.10000000000002px" width="5.5" height="5.5" viewBox="0 0 5 5"><path d="M2.9 0.3L4.7 2.1L3.9 2.3L3 3.2L2.9 4.2L0.8 2.1L1.8 2L2.7 1.1z" fill="#777"/><path d="M1.8 3.2L0.3 4.7" stroke="#777" stroke-width="0.55"/></svg>
<svg style="left:17px;top:141.6px" width="6.4" height="8.2" viewBox="0 0 6.4 8.2"><path d="M0.35 0.35H4.5L5.9 1.75V7.8H0.35z" fill="#f8fafc" stroke="#9aa5b5" stroke-width="0.5"/><path d="M1.6 2.2H3.6M1.6 5.2H4.6M1.6 6.4H4.6" stroke="#7aa0cf" stroke-width="0.5"/><rect x="1.6" y="3" width="3" height="1.5" fill="#8fb6e4"/></svg>
<svg style="left:71.2px;top:143.10000000000002px" width="5.5" height="5.5" viewBox="0 0 5 5"><path d="M2.9 0.3L4.7 2.1L3.9 2.3L3 3.2L2.9 4.2L0.8 2.1L1.8 2L2.7 1.1z" fill="#777"/><path d="M1.8 3.2L0.3 4.7" stroke="#777" stroke-width="0.55"/></svg>
<svg style="left:16px;top:154.8px" width="8" height="6.2" viewBox="0 0 8 6.2"><rect x="0.25" y="0.25" width="7.5" height="5.7" fill="#f3f6f9" stroke="#9aa5b5" stroke-width="0.5"/><rect x="1" y="1" width="6" height="2.2" fill="#8fc0ea"/><path d="M1 5.2L3 3L4.6 4.4L5.6 3.6L7 5.2z" fill="#4a6d4e"/></svg>
<svg style="left:71.2px;top:155.20000000000002px" width="5.5" height="5.5" viewBox="0 0 5 5"><path d="M2.9 0.3L4.7 2.1L3.9 2.3L3 3.2L2.9 4.2L0.8 2.1L1.8 2L2.7 1.1z" fill="#777"/><path d="M1.8 3.2L0.3 4.7" stroke="#777" stroke-width="0.55"/></svg>
<svg style="left:16.6px;top:166px" width="7" height="8" viewBox="0 0 7 8"><rect x="0.2" y="0.2" width="6.6" height="7.6" fill="#555b66"/><rect x="1.4" y="1" width="4.2" height="2.6" fill="#d9a34a"/><rect x="1.4" y="4.2" width="4.2" height="2.8" fill="#4f86c9"/><path d="M0.7 0.8V7.4M6.3 0.8V7.4" stroke="#d5d8de" stroke-width="0.45" stroke-dasharray="0.6 0.6"/></svg>
<svg style="left:71.2px;top:167.20000000000002px" width="5.5" height="5.5" viewBox="0 0 5 5"><path d="M2.9 0.3L4.7 2.1L3.9 2.3L3 3.2L2.9 4.2L0.8 2.1L1.8 2L2.7 1.1z" fill="#777"/><path d="M1.8 3.2L0.3 4.7" stroke="#777" stroke-width="0.55"/></svg>
<svg style="left:17.2px;top:177.9px" width="6.4" height="7.6" viewBox="0 0 6.4 7.6"><path d="M0 0.3H5.2L6.4 1.5V7.6H0z" fill="#ffe08a"/><rect x="0" y="6.8" width="6.4" height="0.8" fill="#efc654"/><path d="M5.2 0.3V1.5H6.4" fill="#f3cf68"/></svg>
<svg style="left:17.2px;top:189.93px" width="6.4" height="7.6" viewBox="0 0 6.4 7.6"><path d="M0 0.3H5.2L6.4 1.5V7.6H0z" fill="#ffe08a"/><rect x="0" y="6.8" width="6.4" height="0.8" fill="#efc654"/><path d="M5.2 0.3V1.5H6.4" fill="#f3cf68"/></svg>
<svg style="left:17.2px;top:201.96px" width="6.4" height="7.6" viewBox="0 0 6.4 7.6"><path d="M0 0.3H5.2L6.4 1.5V7.6H0z" fill="#ffe08a"/><rect x="0" y="6.8" width="6.4" height="0.8" fill="#efc654"/><path d="M5.2 0.3V1.5H6.4" fill="#f3cf68"/></svg>
<svg style="left:17.2px;top:213.99px" width="6.4" height="7.6" viewBox="0 0 6.4 7.6"><path d="M0 0.3H5.2L6.4 1.5V7.6H0z" fill="#ffe08a"/><rect x="0" y="6.8" width="6.4" height="0.8" fill="#efc654"/><path d="M5.2 0.3V1.5H6.4" fill="#f3cf68"/></svg>
<svg style="left:11.6px;top:231.20000000000002px" width="8.6" height="5.2" viewBox="0 0 8 5.2"><path d="M1.6 5A1.5 1.5 0 0 1 1.7 2.1A2.1 2.1 0 0 1 5.3 1.6A1.8 1.8 0 0 1 7.7 3.4A1.2 1.2 0 0 1 7 5z" fill="#1d5db3"/><path d="M0.8 4.9A1.2 1.2 0 0 1 1.2 3A1.6 1.6 0 0 1 3.6 2.6" fill="none" stroke="#4b8ad8" stroke-width="0.6"/></svg>
<svg style="left:11.6px;top:246px" width="8.8" height="7.8" viewBox="0 0 8.8 7.8"><rect x="0.3" y="0.3" width="8.2" height="5.6" fill="#eef6fb" stroke="#8e9aa6" stroke-width="0.5"/><rect x="0.9" y="0.9" width="7" height="4.4" fill="#4cbcf3"/><rect x="3.6" y="6" width="1.6" height="0.8" fill="#9aa4ae"/><rect x="2" y="6.8" width="4.8" height="0.7" fill="#8a949e"/></svg>
<svg style="left:11.8px;top:262.2px" width="9" height="7" viewBox="0 0 9 7"><rect x="2.6" y="0.3" width="5.8" height="4" fill="#3a9ae8" stroke="#2a6fb5" stroke-width="0.4"/><rect x="0.3" y="2.6" width="4.6" height="3.4" fill="#6fb8f2" stroke="#2a6fb5" stroke-width="0.4"/><rect x="1.4" y="6.2" width="2.6" height="0.6" fill="#5a6a7d"/></svg>
<svg style="left:11.4px;top:278.2px" width="9.4" height="7" viewBox="0 0 9.4 7"><circle cx="1.2" cy="3.4" r="0.9" fill="#2d7dd2"/><circle cx="5" cy="3.4" r="1.9" fill="#2d8fe0"/><circle cx="7.2" cy="1.4" r="1.4" fill="#5cb85c"/><circle cx="7.4" cy="5.4" r="1.4" fill="#3fa7d6"/></svg>
<span style="left:22.5px;top:94px;font-size:6.3px;color:#1a1a1a;transform:scaleX(0.920);">Accès rapide</span>
<span style="left:26.5px;top:106px;font-size:6.3px;color:#1a1a1a;transform:scaleX(0.921);">OneDrive</span>
<span style="left:26.5px;top:118px;font-size:6.3px;color:#1a1a1a;transform:scaleX(0.935);">Bureau</span>
<span style="left:26.5px;top:130px;font-size:6.3px;color:#1a1a1a;transform:scaleX(0.894);">Téléchargements</span>
<span style="left:26.5px;top:142px;font-size:6.3px;color:#1a1a1a;transform:scaleX(0.957);">Documents</span>
<span style="left:26.5px;top:154px;font-size:6.3px;color:#1a1a1a;transform:scaleX(0.896);">Images</span>
<span style="left:26.5px;top:166px;font-size:6.3px;color:#1a1a1a;transform:scaleX(0.914);">Vidéos</span>
<span style="left:26.5px;top:178px;font-size:6.3px;color:#1a1a1a;transform:scaleX(0.944);">Plugins</span>
<span style="left:26.5px;top:190px;font-size:6.3px;color:#1a1a1a;transform:scaleX(0.909);">Skins</span>
<span style="left:26.5px;top:202px;font-size:6.3px;color:#1a1a1a;transform:scaleX(0.909);">Skins</span>
<span style="left:26.5px;top:214px;font-size:6.3px;color:#1a1a1a;transform:scaleX(0.943);">VirtualDJ</span>
<span style="left:22.5px;top:230px;font-size:6.3px;color:#1a1a1a;transform:scaleX(0.921);">OneDrive</span>
<span style="left:22.5px;top:246px;font-size:6.3px;color:#1a1a1a;transform:scaleX(0.890);">Ce PC</span>
<span style="left:22.5px;top:262px;font-size:6.3px;color:#1a1a1a;transform:scaleX(0.852);">Réseau</span>
<span style="left:22.5px;top:278px;font-size:6.3px;color:#1a1a1a;transform:scaleX(0.923);">Groupe résidentiel</span>
</div>
<div class="ly" id="ly-menu">
<div style="left:410.6px;top:131.7px;width:1.5px;height:298.3px;background:#7a7a7a;"></div>
<div style="left:137px;top:128px;width:274px;height:302px;background:#fff;border:1px solid #b2b2b2;box-sizing:border-box;"></div>
<div style="left:138.2px;top:153px;width:271px;height:10.9px;background:#e6e6e6;"></div>
<svg style="left:401.4px;top:166.89999999999998px" width="4.2" height="6.6" viewBox="0 0 4.2 6.6"><path d="M0.5 0.3L3.6 3.3L0.5 6.3" fill="none" stroke="#3c3c3c" stroke-width="0.75"/></svg>
<svg style="left:142px;top:176.89999999999998px" width="8.4" height="7.8" viewBox="0 0 8.4 7.8"><rect x="0.3" y="1" width="6.6" height="6.4" fill="#f6f8f4" stroke="#9a9a9a" stroke-width="0.5"/><rect x="0.8" y="5" width="5.6" height="2" fill="#8bcf5a"/><path d="M2.2 5.6L6.6 1.2L7.4 2L3 6.4z" fill="#e8c23a"/><path d="M2.2 5.6L3 6.4L1.8 6.8z" fill="#5a4a2a"/><circle cx="7.4" cy="0.9" r="0.7" fill="#c4161c"/></svg>
<svg style="left:142.2px;top:187.7px" width="8" height="8" viewBox="0 0 8 8"><circle cx="4" cy="4" r="3.1" fill="#fff" stroke="#f7941d" stroke-width="1.5"/><circle cx="4" cy="4" r="1.1" fill="#f7941d"/></svg>
<svg style="left:143px;top:198.7px" width="6.8" height="8.8" viewBox="0 0 6.8 8.8"><path d="M0.3 0.3H6.5V5.6L3.4 8.5L0.3 5.6z" fill="#8d99a6"/><rect x="0.3" y="0.3" width="6.2" height="4.6" fill="#1d4f80"/><path d="M0.9 4.2Q3.4 1.6 5.9 4.2V4.9H0.9z" fill="#9fd3f2"/><path d="M1.4 6L3.4 7.8L5.4 6" fill="none" stroke="#dfe5ea" stroke-width="0.5"/></svg>
<svg style="left:143px;top:209.7px" width="6.8" height="8.8" viewBox="0 0 6.8 8.8"><path d="M0.3 0.3H6.5V5.6L3.4 8.5L0.3 5.6z" fill="#8d99a6"/><rect x="0.3" y="0.3" width="6.2" height="4.6" fill="#1d4f80"/><path d="M0.9 4.2Q3.4 1.6 5.9 4.2V4.9H0.9z" fill="#9fd3f2"/><path d="M1.4 6L3.4 7.8L5.4 6" fill="none" stroke="#dfe5ea" stroke-width="0.5"/></svg>
<svg style="left:401.4px;top:232.89999999999998px" width="4.2" height="6.6" viewBox="0 0 4.2 6.6"><path d="M0.5 0.3L3.6 3.3L0.5 6.3" fill="none" stroke="#3c3c3c" stroke-width="0.75"/></svg>
<svg style="left:401.4px;top:246.89999999999998px" width="4.2" height="6.6" viewBox="0 0 4.2 6.6"><path d="M0.5 0.3L3.6 3.3L0.5 6.3" fill="none" stroke="#3c3c3c" stroke-width="0.75"/></svg>
<svg style="left:142px;top:256.5px" width="9.4" height="8.6" viewBox="0 0 9.4 8.6"><path d="M0.3 1.2L2.4 1.9V8.1L0.3 7.2z" fill="#ececec"/><path d="M0.3 1.9L2.4 2.7M0.3 3L2.4 3.8M0.3 4.1L2.4 4.9M0.3 5.2L2.4 6M0.3 6.3L2.4 7.1" stroke="#4a4a4a" stroke-width="0.45"/><path d="M0.3 1.2L6.4 0.3L9 1.3L2.4 1.9z" fill="#8a1c3c"/><path d="M1.6 1.1L3.4 0.8L4.2 1.2L2.4 1.5z" fill="#e3bb4c"/><path d="M2.4 1.9L9 1.3V3.5L2.4 4.1z" fill="#c6197e"/><path d="M2.4 4.1L9 3.5V5.6L2.4 6.2z" fill="#2b5cab"/><path d="M2.4 6.2L9 5.6V7.5L2.4 8.1z" fill="#3a8f3c"/><path d="M2.4 4.1L9 3.5M2.4 6.2L9 5.6M2.4 8.1L9 7.5" stroke="#2e2428" stroke-width="0.6"/></svg>
<svg style="left:142px;top:267.5px" width="9.4" height="8.6" viewBox="0 0 9.4 8.6"><path d="M0.3 1.2L2.4 1.9V8.1L0.3 7.2z" fill="#ececec"/><path d="M0.3 1.9L2.4 2.7M0.3 3L2.4 3.8M0.3 4.1L2.4 4.9M0.3 5.2L2.4 6M0.3 6.3L2.4 7.1" stroke="#4a4a4a" stroke-width="0.45"/><path d="M0.3 1.2L6.4 0.3L9 1.3L2.4 1.9z" fill="#8a1c3c"/><path d="M1.6 1.1L3.4 0.8L4.2 1.2L2.4 1.5z" fill="#e3bb4c"/><path d="M2.4 1.9L9 1.3V3.5L2.4 4.1z" fill="#c6197e"/><path d="M2.4 4.1L9 3.5V5.6L2.4 6.2z" fill="#2b5cab"/><path d="M2.4 6.2L9 5.6V7.5L2.4 8.1z" fill="#3a8f3c"/><path d="M2.4 4.1L9 3.5M2.4 6.2L9 5.6M2.4 8.1L9 7.5" stroke="#2e2428" stroke-width="0.6"/></svg>
<svg style="left:142px;top:278.5px" width="9.4" height="8.6" viewBox="0 0 9.4 8.6"><path d="M0.3 1.2L2.4 1.9V8.1L0.3 7.2z" fill="#ececec"/><path d="M0.3 1.9L2.4 2.7M0.3 3L2.4 3.8M0.3 4.1L2.4 4.9M0.3 5.2L2.4 6M0.3 6.3L2.4 7.1" stroke="#4a4a4a" stroke-width="0.45"/><path d="M0.3 1.2L6.4 0.3L9 1.3L2.4 1.9z" fill="#8a1c3c"/><path d="M1.6 1.1L3.4 0.8L4.2 1.2L2.4 1.5z" fill="#e3bb4c"/><path d="M2.4 1.9L9 1.3V3.5L2.4 4.1z" fill="#c6197e"/><path d="M2.4 4.1L9 3.5V5.6L2.4 6.2z" fill="#2b5cab"/><path d="M2.4 6.2L9 5.6V7.5L2.4 8.1z" fill="#3a8f3c"/><path d="M2.4 4.1L9 3.5M2.4 6.2L9 5.6M2.4 8.1L9 7.5" stroke="#2e2428" stroke-width="0.6"/></svg>
<svg style="left:142px;top:289.5px" width="9.4" height="8.6" viewBox="0 0 9.4 8.6"><path d="M0.3 1.2L2.4 1.9V8.1L0.3 7.2z" fill="#ececec"/><path d="M0.3 1.9L2.4 2.7M0.3 3L2.4 3.8M0.3 4.1L2.4 4.9M0.3 5.2L2.4 6M0.3 6.3L2.4 7.1" stroke="#4a4a4a" stroke-width="0.45"/><path d="M0.3 1.2L6.4 0.3L9 1.3L2.4 1.9z" fill="#8a1c3c"/><path d="M1.6 1.1L3.4 0.8L4.2 1.2L2.4 1.5z" fill="#e3bb4c"/><path d="M2.4 1.9L9 1.3V3.5L2.4 4.1z" fill="#c6197e"/><path d="M2.4 4.1L9 3.5V5.6L2.4 6.2z" fill="#2b5cab"/><path d="M2.4 6.2L9 5.6V7.5L2.4 8.1z" fill="#3a8f3c"/><path d="M2.4 4.1L9 3.5M2.4 6.2L9 5.6M2.4 8.1L9 7.5" stroke="#2e2428" stroke-width="0.6"/></svg>
<svg style="left:142.8px;top:301.8px" width="7.6" height="7.6" viewBox="0 0 7.6 7.6"><rect x="3" y="0.3" width="4.2" height="6.6" rx="0.5" fill="#5a5a5a"/><rect x="3.8" y="1" width="2.8" height="4.6" fill="#8f8f8f"/><rect x="4.2" y="6.4" width="2.4" height="0.9" fill="#2e2e2e"/><path d="M0.3 1.6H2.6L3.1 2.2H5.8V5.6H0.3z" fill="#f1e21c" stroke="#3a3a20" stroke-width="0.5"/><rect x="0.9" y="3.2" width="4.3" height="0.8" fill="#fff59a"/></svg>
<svg style="left:401.4px;top:312.9px" width="4.2" height="6.6" viewBox="0 0 4.2 6.6"><path d="M0.5 0.3L3.6 3.3L0.5 6.3" fill="none" stroke="#3c3c3c" stroke-width="0.75"/></svg>
<svg style="left:142.8px;top:312.8px" width="7.6" height="7.6" viewBox="0 0 7.6 7.6"><rect x="3" y="0.3" width="4.2" height="6.6" rx="0.5" fill="#5a5a5a"/><rect x="3.8" y="1" width="2.8" height="4.6" fill="#8f8f8f"/><rect x="4.2" y="6.4" width="2.4" height="0.9" fill="#2e2e2e"/><path d="M0.3 1.6H2.6L3.1 2.2H5.8V5.6H0.3z" fill="#f1e21c" stroke="#3a3a20" stroke-width="0.5"/><rect x="0.9" y="3.2" width="4.3" height="0.8" fill="#fff59a"/></svg>
<svg style="left:142.3px;top:326.59999999999997px" width="8.6" height="8.2" viewBox="0 0 8.6 8.2"><defs><linearGradient id="rtg" x1="0" y1="0" x2="0" y2="1"><stop offset="0" stop-color="#28a6e4"/><stop offset="0.55" stop-color="#2fbfb0"/><stop offset="1" stop-color="#40c76e"/></linearGradient></defs><rect x="0.1" y="0.1" width="8.4" height="8" rx="0.9" fill="url(#rtg)"/><path d="M4.3 7L1.5 4.2A1.6 1.6 0 0 1 4.3 2.4A1.6 1.6 0 0 1 7.1 4.2z" fill="none" stroke="#f2fffb" stroke-width="0.85"/><path d="M3.2 4.2L4.1 5.1L5.6 3.2" fill="none" stroke="#f2fffb" stroke-width="0.6"/></svg>
<svg style="left:401.4px;top:341.9px" width="4.2" height="6.6" viewBox="0 0 4.2 6.6"><path d="M0.5 0.3L3.6 3.3L0.5 6.3" fill="none" stroke="#3c3c3c" stroke-width="0.75"/></svg>
<div style="left:154.6px;top:243px;width:254.4px;height:1px;background:#e0e0e0;"></div>
<div style="left:154.6px;top:323px;width:254.4px;height:1px;background:#e0e0e0;"></div>
<div style="left:154.6px;top:338px;width:254.4px;height:1px;background:#e0e0e0;"></div>
<div style="left:154.6px;top:352px;width:254.4px;height:1px;background:#e0e0e0;"></div>
<div style="left:154.6px;top:377px;width:254.4px;height:1px;background:#e0e0e0;"></div>
<div style="left:154.6px;top:414px;width:254.4px;height:1px;background:#e0e0e0;"></div>
<span style="left:154.5px;top:133px;font-size:6.3px;color:#141414;font-weight:700;transform:scaleX(0.926);">Ouvrir</span>
<span style="left:154.5px;top:144px;font-size:6.3px;color:#141414;transform:scaleX(0.944);">Ajouter à la liste du Lecteur Windows Media</span>
<span style="left:154.5px;top:155px;font-size:6.3px;color:#141414;transform:scaleX(0.929);">Lire avec le Lecteur Windows Media</span>
<span style="left:154.5px;top:166px;font-size:6.3px;color:#141414;transform:scaleX(0.936);">Effectuer une conversion de type (transtypage) vers l'appareil</span>
<span style="left:154.5px;top:177px;font-size:6.3px;color:#141414;transform:scaleX(0.961);">Edit with Notepad++</span>
<span style="left:154.5px;top:188px;font-size:6.3px;color:#141414;transform:scaleX(0.919);">Analyser les éléments sélectionnés</span>
<span style="left:154.5px;top:199px;font-size:6.3px;color:#141414;transform:scaleX(1.014);">Edit with PSPad</span>
<span style="left:154.5px;top:210px;font-size:6.3px;color:#141414;transform:scaleX(0.901);">Edit with PSPad (hex)</span>
<span style="left:154.5px;top:221px;font-size:6.3px;color:#141414;transform:scaleX(0.975);">Mp3tag</span>
<span style="left:154.5px;top:232px;font-size:6.3px;color:#141414;transform:scaleX(0.954);">Ajouter à un album partagé</span>
<span style="left:154.5px;top:246px;font-size:6.3px;color:#141414;transform:scaleX(0.906);">Partager avec</span>
<span style="left:154.5px;top:257px;font-size:6.3px;color:#141414;transform:scaleX(0.935);">Ajouter à l'archive...</span>
<span style="left:154.5px;top:268px;font-size:6.3px;color:#141414;transform:scaleX(0.964);">Ajouter à "Autour du monde Destination Kompa.rar"</span>
<span style="left:154.5px;top:279px;font-size:6.3px;color:#141414;transform:scaleX(0.931);">Compresser et envoyer par e-mail...</span>
<span style="left:154.5px;top:290px;font-size:6.3px;color:#141414;transform:scaleX(0.948);">Compresser dans "Autour du monde Destination Kompa.rar" et envoyer par e-mail</span>
<span style="left:154.5px;top:301px;font-size:6.3px;color:#141414;transform:scaleX(0.914);">Compresser et partager (WinZip Express)</span>
<span style="left:154.5px;top:312px;font-size:6.3px;color:#141414;transform:scaleX(0.939);">WinZip</span>
<span style="left:154.5px;top:327px;font-size:6.3px;color:#141414;transform:scaleX(0.922);">Ajouter à RealTimes</span>
<span style="left:154.5px;top:341px;font-size:6.3px;color:#141414;transform:scaleX(0.895);">Envoyer vers</span>
<span style="left:154.5px;top:356px;font-size:6.3px;color:#141414;transform:scaleX(0.930);">Couper</span>
<span style="left:154.5px;top:367px;font-size:6.3px;color:#141414;transform:scaleX(0.943);">Copier</span>
<span style="left:154.5px;top:381px;font-size:6.3px;color:#141414;transform:scaleX(0.932);">Créer un raccourci</span>
<span style="left:154.5px;top:392px;font-size:6.3px;color:#141414;transform:scaleX(0.940);">Supprimer</span>
<span style="left:154.5px;top:403px;font-size:6.3px;color:#141414;transform:scaleX(0.940);">Renommer</span>
<span style="left:154.5px;top:418px;font-size:6.3px;color:#141414;transform:scaleX(0.923);">Propriétés</span>
</div>
<div class="ly" id="ly-task">
<div style="left:0px;top:430px;width:800px;height:20px;background:#0b0b0b;background:linear-gradient(90deg,#010101 0px,#020402 10px,#07140b 22px,#0b0d0a 24px,#0a0a0a 200px,#0a0808 420px,#0a0705 560px,#0a0b09 650px,#141a12 668px,#151b13 696px,#0b0f0b 706px,#0a0c0a 751px,#300d0d 755px,#320e0e 761px,#262c0d 764px,#292f0e 771px,#141a0e 776px,#0d120c 786px,#14170c 800px);"></div>
<svg style="left:8px;top:436px" width="8.4" height="8" viewBox="0 0 8.4 8"><path d="M0 1.1L3.5 0.6V3.7H0zM4 0.55L8.3 0V3.7H4zM0 4.2H3.5V7.3L0 6.8zM4 4.2H8.3V7.9L4 7.35z" fill="#fff"/></svg>
<div style="left:24px;top:430px;width:171.8px;height:20px;background:#3a3a3a;"></div>
<svg style="left:202.6px;top:436.3px" width="11" height="7.6" viewBox="0 0 11 7.6"><rect x="2.4" y="0.4" width="6.2" height="6.6" fill="none" stroke="#e8e8e8" stroke-width="0.7"/><path d="M1.6 1.2H0.4V6.2H1.6M9.4 1.2H10.6V6.2H9.4" fill="none" stroke="#e8e8e8" stroke-width="0.7"/></svg>
<svg style="left:227.2px;top:434.6px" width="11.4" height="10.6" viewBox="0 0 11.4 10.6"><text x="5.7" y="10.1" font-size="15.5" font-weight="700" text-anchor="middle" fill="#1f8ae6" font-family="Liberation Sans, sans-serif">e</text></svg>
<div style="left:245px;top:430px;width:24.6px;height:20px;background:#393939;"></div>
<div style="left:245px;top:448.5px;width:24.6px;height:1.5px;background:#7cbcf0;"></div>
<svg style="left:252px;top:434.8px" width="11.4" height="10" viewBox="0 0 11.4 10"><path d="M0.2 0.4H4.4L5.2 1.6H11.2V9.4H0.2z" fill="#f3c44c"/><rect x="0.2" y="2.4" width="11" height="7" fill="#ffe392"/><path d="M2.2 9.4V6.2H9.2V9.4H7.4V7.8H4V9.4z" fill="#2f9be9"/><rect x="2.2" y="5.4" width="7" height="1.2" fill="#58b6f3"/></svg>
<svg style="left:275.8px;top:434.2px" width="11.6" height="11.2" viewBox="0 0 11.6 11.2"><path d="M0.4 3.6L11 2.6V10.8L0.4 9.6z" fill="#fff"/><path d="M3.4 3.2V1.6Q5.7 0 8 1.2V2.8" fill="none" stroke="#fff" stroke-width="0.9"/><path d="M3.6 5H5.4V6.4H3.6zM6 4.9H8V6.4H6zM3.6 6.9H5.4V8.3H3.6zM6 6.9H8V8.5H6z" fill="#1a1a1a"/></svg>
<svg style="left:300.8px;top:434px" width="11.6" height="11.6" viewBox="0 0 11.6 11.6"><circle cx="5.8" cy="5.8" r="5.5" fill="#e8721c"/><circle cx="6.4" cy="4.6" r="3.1" fill="#2c5fc9"/><path d="M0.6 4.2Q2.8 6.4 5.6 5.4Q8.6 5.2 8.6 8.4Q6.2 11.2 2.4 9.6z" fill="#f39a1f"/><path d="M8 1.2Q11.2 3.2 11 7Q9.6 10.8 6 11.2Q9.4 8.6 8.6 5z" fill="#f0a020"/></svg>
<svg style="left:325.4px;top:434px" width="11.6" height="11.6" viewBox="0 0 11.6 11.6"><circle cx="5.8" cy="5.8" r="5.5" fill="#dd4b3e"/><path d="M5.8 5.8L1 8.6A5.5 5.5 0 0 0 6.8 11.2L9 5.8z" fill="#2ea24b"/><path d="M5.8 5.8H11.2A5.5 5.5 0 0 1 6.4 11.3z" fill="#f7cb2f"/><path d="M5.8 5.8L1 3A5.5 5.5 0 0 0 1 8.6z" fill="#2ea24b"/><circle cx="5.8" cy="5.8" r="2.6" fill="#f4f4f4"/><circle cx="5.8" cy="5.8" r="2" fill="#4a8df0"/></svg>
<div style="left:321px;top:448.5px;width:20px;height:1.5px;background:#7cbcf0;"></div>
<svg style="left:349.8px;top:435.2px" width="10.6" height="9.8" viewBox="0 0 10.6 9.8"><rect x="0.2" y="0.2" width="10.2" height="9.4" fill="#5ba3de"/><rect x="0.2" y="0.2" width="10.2" height="1.4" fill="#86c0ee"/><circle cx="5.3" cy="5" r="3.2" fill="#f08326"/><path d="M4.2 3.2L7.4 5L4.2 6.8z" fill="#fff"/></svg>
<div style="left:345px;top:448.5px;width:21px;height:1.5px;background:#7cbcf0;"></div>
<svg style="left:373.8px;top:433.8px" width="12.6" height="11.6" viewBox="0 0 12.6 11.6"><path d="M11 2.6A5 5 0 1 0 11.6 8.4L9.2 7.2A2.4 2.4 0 1 1 8.8 3.8z" fill="#d8281f"/><path d="M7.6 0.6L8.8 1.4L4.4 7.6L3.2 6.8z" fill="#3c78c8"/><path d="M0.4 8.2L3.6 6.2L5.4 7.6L3.6 11.2z" fill="#e9c98c"/></svg>
<svg style="left:398.4px;top:434px" width="11.2" height="11.2" viewBox="0 0 11.2 11.2"><circle cx="5.6" cy="5.6" r="5.4" fill="#1b78c4"/><path d="M5.6 0.6V10.6M0.6 5.6H10.6M2 2L9.2 9.2M9.2 2L2 9.2" stroke="#e6f2fb" stroke-width="0.9"/><circle cx="5.2" cy="5.8" r="1.5" fill="#fff"/><circle cx="5.2" cy="5.8" r="0.9" fill="#8ec63f"/></svg>
<svg style="left:422.8px;top:433.6px" width="12.4" height="12.4" viewBox="0 0 12.4 12.4"><circle cx="6.2" cy="6.2" r="5.6" fill="#0a0a0a" stroke="#2a86d8" stroke-width="0.8"/><path d="M2.6 10.2Q6.6 7.6 7.6 2.6Q7.8 7.6 9.6 10.6Q6 12.2 2.6 10.2z" fill="#2b95ea"/></svg>
<svg style="left:447.6px;top:433.8px" width="12" height="10" viewBox="0 0 12 10"><path d="M5 2.6L10.8 0.4L10 2.2L6.2 4V7.6A1.8 1.6 0 1 1 5 6.2z" fill="#e3131b"/><path d="M0.6 5.4L3.2 6.8L0.6 8.4zM11.4 5.4L8.8 6.8L11.4 8.4z" fill="#6a6a6a"/></svg>
<svg style="left:471.8px;top:433.8px" width="12.6" height="12.4" viewBox="0 0 12.6 12.4"><circle cx="9.6" cy="6.2" r="2.9" fill="#2a2a2a"/><circle cx="9.6" cy="6.2" r="0.9" fill="#8a8a8a"/><path d="M0.4 2.4L8 0.2V12.2L0.4 10z" fill="#e5111f"/><circle cx="4.2" cy="6.2" r="2.2" fill="none" stroke="#fff" stroke-width="0.6"/><path d="M3.4 5.2H5V7.2H3.4z" fill="none" stroke="#fff" stroke-width="0.5"/></svg>
<div style="left:468px;top:448.5px;width:20px;height:1.5px;background:#7cbcf0;"></div>
<svg style="left:496.6px;top:433.8px" width="12" height="12.4" viewBox="0 0 12 12.4"><ellipse cx="5" cy="3.6" rx="4.4" ry="3" fill="#dfe3e8" stroke="#c43a3a" stroke-width="0.8"/><ellipse cx="4.6" cy="5.2" rx="3.6" ry="1.6" fill="#9aa3ad"/><path d="M5.4 6.4L10.4 11.6M9.6 6.8L6.6 11.4" stroke="#2a86d8" stroke-width="0.9"/><circle cx="6.4" cy="11" r="1" fill="none" stroke="#2a86d8" stroke-width="0.6"/><circle cx="10.2" cy="11" r="1" fill="none" stroke="#2a86d8" stroke-width="0.6"/></svg>
<svg style="left:520.6px;top:434px" width="12.8" height="11.6" viewBox="0 0 12.8 11.6"><rect x="2.6" y="0.2" width="9.6" height="6.6" fill="#2f62c4" stroke="#c9d4e6" stroke-width="0.5"/><rect x="0.4" y="2" width="8.6" height="5.6" fill="#6fa6ea" stroke="#dfe7f3" stroke-width="0.5"/><rect x="1.2" y="3.2" width="7" height="1.2" fill="#cfe3fa"/><path d="M3.4 8H8.8L9.8 10H2.6z" fill="#c9ced6"/><rect x="2" y="10" width="8.6" height="1.2" fill="#8b939e"/></svg>
<div style="left:517px;top:448.5px;width:20px;height:1.5px;background:#7cbcf0;"></div>
<svg style="left:544.8px;top:434.4px" width="12.6" height="11.8" viewBox="0 0 12.6 11.8"><rect x="0.3" y="1.6" width="12" height="9.6" rx="0.8" fill="#e8872b"/><rect x="1.4" y="0.3" width="5" height="2" fill="#e8872b"/><rect x="1.2" y="2.8" width="10.2" height="7.2" fill="#c96a17"/><rect x="3" y="3.6" width="6.6" height="5.6" fill="none" stroke="#f6c48e" stroke-width="0.5"/><circle cx="6.3" cy="6.4" r="1.6" fill="#f0a45a"/></svg>
<div style="left:542px;top:448.5px;width:19.4px;height:1.5px;background:#7cbcf0;"></div>
<svg style="left:569.6px;top:433.6px" width="12.6" height="12" viewBox="0 0 12.6 12"><ellipse cx="5.6" cy="7.2" rx="5.2" ry="4" fill="#c9dced" stroke="#8fb0cf" stroke-width="0.4"/><ellipse cx="5.6" cy="8.4" rx="1.6" ry="1.1" fill="#0b0b0b"/><circle cx="2.6" cy="6.4" r="0.9" fill="#d93a2b"/><circle cx="4.6" cy="4.8" r="0.9" fill="#4caf50"/><circle cx="7" cy="4.6" r="0.9" fill="#f2c230"/><path d="M6 11L10 2.4L10.8 2.8L7 11.4z" fill="#d9822b"/><path d="M9.8 2.6L11 0.4L11.8 2.2z" fill="#c96a17"/></svg>
<div style="left:566px;top:448.5px;width:20px;height:1.5px;background:#7cbcf0;"></div>
<svg style="left:666.8px;top:437.8px" width="6.6" height="4.2" viewBox="0 0 6.6 4.2"><path d="M0.5 3.6L3.3 0.8L6.1 3.6" fill="none" stroke="#e6e6e6" stroke-width="0.9"/></svg>
<svg style="left:677.4px;top:437.2px" width="9" height="5.8" viewBox="0 0 9 5.8"><rect x="2.4" y="1.6" width="6.2" height="3.6" fill="none" stroke="#f0f0f0" stroke-width="0.7"/><rect x="3.2" y="2.4" width="4.6" height="2" fill="#e8e8e8"/><path d="M0.4 0.3V2.2H2.2M0.4 1H2" stroke="#f0f0f0" stroke-width="0.7" fill="none"/></svg>
<svg style="left:690.8px;top:436.4px" width="7.6" height="7" viewBox="0 0 7.6 7"><path d="M0.6 6.6A6 6 0 0 1 6.8 0.6M1.8 6.6A4.6 4.6 0 0 1 6.8 2.2M3.2 6.6A3.2 3.2 0 0 1 6.8 3.8M4.8 6.6A1.6 1.6 0 0 1 6.8 5.4" fill="none" stroke="#f0f0f0" stroke-width="0.6"/><circle cx="6.4" cy="6.4" r="0.7" fill="#f0f0f0"/></svg>
<svg style="left:701.8px;top:436.6px" width="8" height="6.8" viewBox="0 0 8 6.8"><path d="M0.4 2.4H1.8L3.6 0.6V6.2L1.8 4.4H0.4z" fill="none" stroke="#f0f0f0" stroke-width="0.55"/><path d="M4.6 2.2Q5.4 3.4 4.6 4.6M5.8 1.2Q7.2 3.4 5.8 5.6" fill="none" stroke="#f0f0f0" stroke-width="0.5"/></svg>
<svg style="left:713.8px;top:435.6px" width="8.6" height="8.4" viewBox="0 0 8.6 8.4"><path d="M0.2 0.2H8.2V6H5.3L4.2 7.9L3.1 6H0.2z" fill="#fff"/><path d="M1.6 1.9H6.8M1.6 3.2H6.8M1.6 4.5H5" stroke="#1a1a1a" stroke-width="0.55"/></svg>
<svg style="left:725.8px;top:436.2px" width="12.6" height="6.8" viewBox="0 0 12.6 6.8"><rect x="0.4" y="0.4" width="11.8" height="5.9" rx="0.4" fill="none" stroke="#f0f0f0" stroke-width="0.75"/><path d="M1.8 2.1H10.8" stroke="#d8d8d8" stroke-width="0.6" stroke-dasharray="0.9 0.7"/><path d="M2.8 4.5H9.8" stroke="#f0f0f0" stroke-width="0.7"/></svg>
<div style="left:797.2px;top:430px;width:0.5px;height:20px;background:#4a4a4a;"></div>
<span style="left:30.5px;top:436px;font-size:7.3px;color:#9e9e9e;transform:scaleX(0.995);">Rechercher sur le web et dans Windows</span>
<span style="left:743.6px;top:436px;font-size:6.3px;color:#fff;transform:scaleX(0.825);">FRA</span>
<span style="left:771px;top:432px;font-size:6.3px;color:#fff;transform:scaleX(0.888);">14:24</span>
<span style="left:763px;top:441px;font-size:6.3px;color:#fff;transform:scaleX(0.920);">23/08/2015</span>
</div>
</div></body></html>
